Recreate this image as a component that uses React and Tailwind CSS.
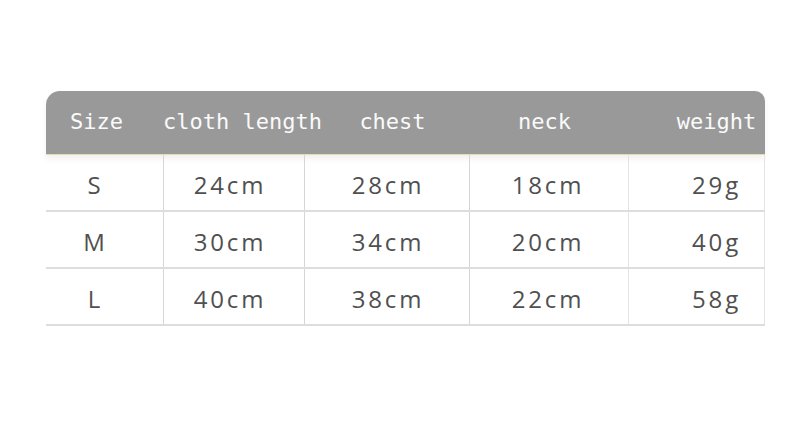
import React from 'react';

const headers = ['Size', 'cloth length', 'chest', 'neck', 'weight'];

const rows = [
  ['S', '24cm', '28cm', '18cm', '29g'],
  ['M', '30cm', '34cm', '20cm', '40g'],
  ['L', '40cm', '38cm', '22cm', '58g'],
];

// small per-column nudges so text sits where the picture has it
const headNudge = ['pr-[16px]', 'pr-[0px]', 'pl-[12px]', 'pr-[8px]', 'pl-[40px]'];
const cellNudge = ['pr-[18px]', 'pr-[8px]', 'pl-[2px]', 'pr-[2px]', 'pl-[40px]'];

export default function App() {
  return (
    <div className="w-[800px] h-[425px] bg-white overflow-hidden">
      <div className="ml-[46px] mt-[91px] w-[719px]">
        {/* header band */}
        <div className="grid grid-cols-[117px_141px_165px_159px_137px] h-[64px] bg-[#999999] rounded-tl-[14px] rounded-tr-[10px] border-b border-[#e6dcae] shadow-[0_4px_6px_rgba(0,0,0,0.06)] items-center text-[#fafafa] text-[22px] font-['DejaVu_Sans_Mono',monospace]">
          {headers.map((h, i) => (
            <div key={h} className={`text-center whitespace-nowrap pb-[3px] ${headNudge[i]}`}>{h}</div>
          ))}
        </div>

        {/* body rows */}
        {rows.map((row, r) => (
          <div
            key={r}
            className="grid grid-cols-[117px_141px_165px_159px_137px] h-[57px] border-b-2 border-[#dddddd] text-[#505050] text-[24px] font-['Open_Sans',sans-serif] tracking-[0.12em]"
          >
            {row.map((c, i) => (
              <div
                key={i}
                className={`flex items-center justify-center pt-[4px] ${cellNudge[i]} ${i > 0 ? 'border-l border-[#d6d6d6]' : ''} ${i === 4 ? 'border-r border-[#e4e4e4]' : ''}`}
              >
                {c}
              </div>
            ))}
          </div>
        ))}
      </div>
    </div>
  );
}
